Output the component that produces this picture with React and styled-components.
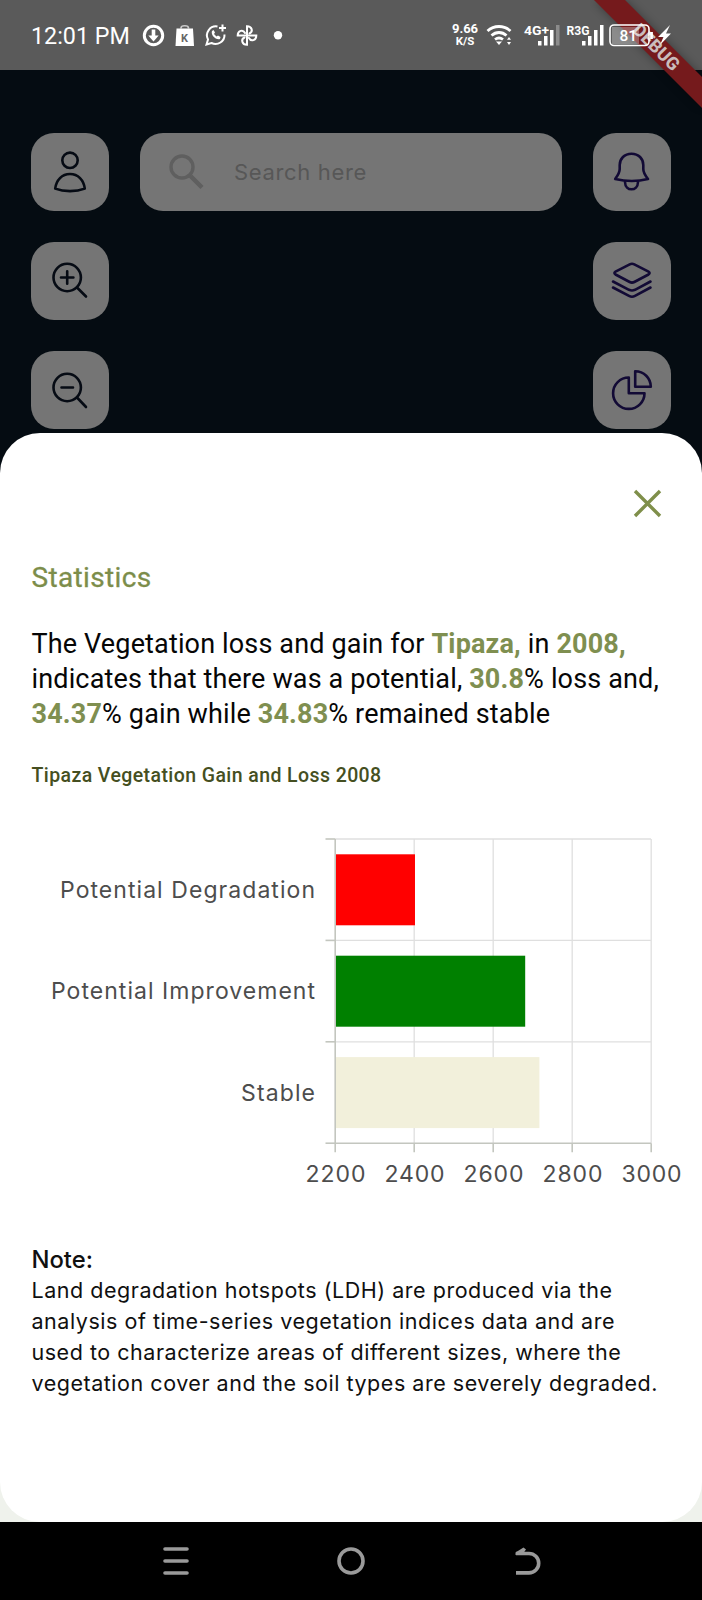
import React from "react";
import styled, { createGlobalStyle } from "styled-components";

const GlobalStyle = createGlobalStyle`
  * { box-sizing: border-box; }
  body { margin: 0; background: #000; }
  p, h1, h2, h3 { margin: 0; }
`;

const Screen = styled.div`
  position: relative;
  width: 702px;
  height: 1600px;
  overflow: hidden;
  display: flex;
  flex-direction: column;
  background: #050c12;
  font-family: Roboto, "Liberation Sans", sans-serif;
`;

const StatusBar = styled.header`
  height: 70px;
  flex: none;
  display: flex;
  align-items: center;
  justify-content: space-between;
  padding: 0 28px 0 31px;
  background: #5a5a5a;
  color: #fff;
`;

const StatusGroup = styled.div`
  position: relative;
  z-index: 2;
  display: flex;
  align-items: center;
  gap: ${(p) => p.$gap}px;
`;

const Clock = styled.span`
  font-size: 23.3px;
  line-height: 28px;
  width: 98px;
  white-space: nowrap;
  margin-top: 2px;
`;

const NetSpeed = styled.div`
  display: flex;
  flex-direction: column;
  align-items: center;
  width: 26px;
  font-weight: 700;
  font-size: 13px;
  line-height: 12.5px;
  white-space: nowrap;
  span + span { font-size: 11.5px; }
`;

const MapArea = styled.main`
  height: 363px;
  flex: none;
  display: flex;
  justify-content: space-between;
  align-items: flex-start;
  padding: 62.5px 31px 0;
`;

const ToolColumn = styled.div`
  display: flex;
  flex-direction: column;
  gap: 31px;
`;

const ToolButton = styled.button`
  display: flex;
  align-items: center;
  justify-content: center;
  width: 78px;
  height: 78px;
  padding: 0;
  border: 0;
  border-radius: 23px;
  background: #757575;
  color: ${(p) => p.$tint || "#060b14"};
`;

const SearchField = styled.div`
  display: flex;
  align-items: center;
  width: 422px;
  height: 78px;
  padding-left: 29px;
  gap: 29px;
  border-radius: 23px;
  background: #757575;
`;

const SearchHint = styled.span`
  font: 400 22px/28px Inter, sans-serif;
  letter-spacing: 0.65px;
  color: #575757;
`;

const SheetBackdrop = styled.div`
  height: 1089px;
  flex: none;
  background: linear-gradient(#050c12 50%, #eff2ec 50%);
`;

const Sheet = styled.section`
  height: 100%;
  display: flex;
  flex-direction: column;
  padding: 53px 31px 0 31.5px;
  border-radius: 40px;
  background: #fff;
`;

const CloseButton = styled.button`
  align-self: flex-end;
  display: flex;
  padding: 0;
  margin-right: 7px;
  border: 0;
  background: none;
`;

const SheetTitle = styled.h1`
  margin-top: 40px;
  font-weight: 400;
  font-size: 28px;
  line-height: 36px;
  letter-spacing: 0.35px;
  color: #7c8d4a;
  -webkit-text-stroke: 0.3px currentColor;
`;

const Summary = styled.p`
  margin-top: 31px;
  font-size: 27px;
  line-height: 35.1px;
  letter-spacing: 0.15px;
  color: #060606;
  white-space: nowrap;
`;

const Strong = styled.strong`
  font-weight: 700;
  color: #7f8f50;
`;

const ChartTitle = styled.h2`
  margin-top: 30px;
  font-weight: 500;
  font-size: 19.5px;
  line-height: 28px;
  letter-spacing: 0.41px;
  color: #454f21;
`;

const Chart = styled.svg`
  display: block;
  flex: none;
  margin: 38px -31px 0 -31.5px;
`;

const Label = styled.text`
  font-family: Inter, sans-serif;
  font-size: 23px;
  fill: #4d4d4d;
`;

const NoteTitle = styled.h3`
  margin-top: 45.5px;
  font: 500 23.8px/31px Inter, sans-serif;
  color: #101010;
`;

const NoteText = styled.p`
  font: 400 21.5px/31.2px Inter, sans-serif;
  letter-spacing: 0.53px;
  color: #101010;
  white-space: nowrap;
`;

const NavBar = styled.nav`
  height: 78px;
  flex: none;
  display: flex;
  align-items: center;
  justify-content: center;
  gap: 139.5px;
  background: #000;
`;

const DebugBanner = styled.svg`
  position: absolute;
  z-index: 1;
  top: 0;
  right: 0;
`;

const Icon = ({ w = 42, h = 42, sw = 2.6, children }) => (
  <svg width={w} height={h} viewBox={`0 0 ${w} ${h}`} fill="none" stroke="currentColor"
    strokeWidth={sw} strokeLinecap="round" strokeLinejoin="round">{children}</svg>
);

const UserIcon = () => (
  <Icon>
    <circle cx="21" cy="9.3" r="7.700" />
    <path d="M21 23C13 23 7.2 29 6.2 37.600C15 41 27 41 35.8 37.600C34.8 29 29 23 21 23Z" />
  </Icon>
);

const ZoomIcon = ({ plus }) => (
  <Icon>
    <circle cx="18.2" cy={plus ? 17.5 : 18.5} r="13.700" />
    <path d={plus ? "M28 27.5L37 36.500M12 17.5H24.4M18.2 11.3V23.7" : "M28 28.5L37 38M12.500 18.5H24"} />
  </Icon>
);

const BellIcon = () => (
  <Icon>
    <path d="M20.5 2.7C13.4 2.7 8.7 7.8 8.7 14V18C8.7 22 6 25.5 4.2 28Q21 32 37 28C35 25.5 32.3 22 32.3 18V14C32.3 7.8 27.6 2.7 20.5 2.7Z" />
    <path d="M14 31C14.2 40.7 26.8 40.7 27 31" />
  </Icon>
);

const LayersIcon = () => (
  <Icon>
    <path d="M18.7 4.4Q21 3.2 23.3 4.4L37.500 11.7Q39.700 13 37.500 14.5L23.3 22Q21 23.2 18.7 22L4.500 14.5Q2.300 13 4.500 11.7Z" />
    <path d="M2.000 21.500L18.000 29.800Q21.000 31.200 24.000 29.800L39.500 21.500" />
    <path d="M2.000 27.500L18.000 35.900Q21.000 37.500 24.000 35.900L39.500 27.500" />
  </Icon>
);

const PieIcon = () => (
  <Icon>
    <path d="M17.800 8.500A15.700 15.700 0 1 0 33.500 24.200H17.800Z" />
    <path d="M24.200 2.200V17.800H39.800A15.600 15.600 0 0 0 24.200 2.200Z" />
  </Icon>
);

const SearchIcon = () => (
  <svg width="36" height="36" viewBox="0 0 36 36" fill="none" stroke="#5f5f5f" strokeWidth="3.400">
    <circle cx="13" cy="13" r="11" />
    <path d="M21.500 22L33 33.500" strokeWidth="4.500" />
  </svg>
);

const BARS = [
  { name: "Potential Degradation", value: 2402, color: "#ff0000", width: 255 },
  { name: "Potential Improvement", value: 2681, color: "#008000", width: 264 },
  { name: "Stable", value: 2717, color: "#f2f0db", width: 74 },
];
const TICKS = [2200, 2400, 2600, 2800, 3000];
const LEFT = 335.2;
const TOP = 11;
const ROW = 101.4;
const scaleX = (v) => LEFT + ((v - 2200) / 800) * 316;

const VegetationChart = () => (
  <Chart width="702" height="370" viewBox="0 0 702 370">
    <g stroke="#dfdfdf" strokeWidth="1.300">
      {TICKS.slice(1).map((t) => <path key={t} d={`M${scaleX(t)} ${TOP}V${TOP + 3 * ROW}`} />)}
      {[0, 1, 2].map((i) => <path key={i} d={`M${LEFT} ${TOP + i * ROW}H651`} />)}
    </g>
    {BARS.map((b, i) => (
      <rect key={b.name} x={LEFT} y={TOP + 15.300 + i * ROW} width={scaleX(b.value) - LEFT} height="71" fill={b.color} />
    ))}
    <g stroke="#c3c6bf" strokeWidth="1.600">
      {[0, 1, 2, 3].map((i) => <path key={i} d={`M325.500 ${TOP + i * ROW}H${LEFT}`} />)}
      {TICKS.map((t) => <path key={t} d={`M${scaleX(t)} ${TOP + 3 * ROW}v9`} />)}
      <path d={`M${LEFT} ${TOP}V${TOP + 3 * ROW}H651`} fill="none" />
    </g>
    {BARS.map((b, i) => (
      <Label key={b.name} x={315 - b.width} y={TOP + 58.700 + i * ROW} textLength={b.width}>{b.name}</Label>
    ))}
    {TICKS.map((t) => (
      <Label key={t} x={scaleX(t) - 29.700} y="354" textLength="60">{t}</Label>
    ))}
  </Chart>
);

const StatusLeftIcons = () => (
  <svg width="150" height="30" viewBox="136 20 150 30" fill="none" stroke="#fff" strokeWidth="2">
    <circle cx="153.500" cy="35.500" r="9.200" strokeWidth="3" />
    <path d="M153.500 29.500V38" strokeWidth="3.600" />
    <path d="M148.300 35.500H158.700L153.500 41.500Z" fill="#fff" stroke="none" />
    <path d="M176.500 28.500H193L194 46H175.500Z" fill="#fff" stroke="none" />
    <path d="M181 29V28C181 25 188.500 25 188.500 28V29" strokeWidth="1.600" stroke="#ccc" />
    <text x="181" y="41.500" fontSize="11" fontWeight="700" fill="#666" stroke="none">K</text>
    <path d="M217.500 26.500A9 9 0 0 0 208 39.500L206.500 44.500L211.500 43A9 9 0 0 0 224.500 34.500" />
    <path d="M222.500 24.500V31.500M219 28H226" />
    <path d="M212 31C210.500 35 216 40.500 220 39L220.500 37L218 35.500L216.500 36.500L214 34L215 32.500L213.500 30Z" fill="#fff" stroke="none" />
    {[0, 90, 180, 270].map((r) => (
      <path key={r} transform={`rotate(${r} 247 35.500)`} d="M247 35.500V26.200C252 26.200 253.500 31.500 249.500 33.500" strokeLinecap="round" />
    ))}
    <circle cx="278" cy="35.300" r="4.200" fill="#fff" stroke="none" />
  </svg>
);

const StatusRightIcons = () => (
  <svg width="190" height="30" viewBox="484 20 190 30" fill="none" stroke="#fff" strokeWidth="2.800">
    <path d="M487.500 31C494 25 504 25 510.500 31M491.500 35.500C496 31.500 502 31.500 506.500 35.500M495 39.500Q499 36.500 503 39.500" />
    <path d="M496 41.500L499 45L502 41.500Z" fill="#fff" stroke="none" />
    <path d="M507 39.800L509 37L511 39.800ZM507 42L509 45L511 42Z" fill="#fff" stroke="none" />
    <g fill="#fff" stroke="none" fontSize="13.500" fontWeight="700">
      <text x="524" y="35" textLength="25" lengthAdjust="spacingAndGlyphs">4G+</text>
      <text x="566.500" y="35" textLength="23" lengthAdjust="spacingAndGlyphs">R3G</text>
      <rect x="538" y="41" width="3.500" height="4.500" />
      <rect x="544" y="36" width="3.500" height="9.500" />
      <rect x="550" y="30" width="3.500" height="15.500" />
      <rect x="556" y="25" width="3.500" height="20.500" fill="#8c8c8c" />
      <rect x="582" y="41" width="3.500" height="4.500" />
      <rect x="588" y="36" width="3.500" height="9.500" />
      <rect x="594" y="30" width="3.500" height="15.500" />
      <rect x="600" y="25" width="3.500" height="20.500" />
    </g>
    <rect x="612" y="27" width="27" height="17" fill="#fff" opacity="0.300" stroke="none" />
    <rect x="610" y="25" width="39" height="20.500" rx="4" strokeWidth="1.600" />
    <path d="M651.500 32V39" />
    <text x="619.500" y="41" fontSize="15.500" fontWeight="500" fill="#fff" stroke="none">81</text>
    <path d="M670 25L658 37H663.500L660 45L671 33.500H666Z" fill="#fff" stroke="none" />
  </svg>
);

export default function App() {
  return (
    <Screen>
      <GlobalStyle />
      <StatusBar>
        <StatusGroup $gap={7}>
          <Clock>12:01 PM</Clock>
          <StatusLeftIcons />
        </StatusGroup>
        <StatusGroup $gap={6}>
          <NetSpeed><span>9.66</span><span>K/S</span></NetSpeed>
          <StatusRightIcons />
        </StatusGroup>
      </StatusBar>
      <MapArea>
        <ToolColumn>
          <ToolButton><UserIcon /></ToolButton>
          <ToolButton><ZoomIcon plus /></ToolButton>
          <ToolButton><ZoomIcon /></ToolButton>
        </ToolColumn>
        <SearchField>
          <SearchIcon />
          <SearchHint>Search here</SearchHint>
        </SearchField>
        <ToolColumn>
          <ToolButton $tint="#120a35"><BellIcon /></ToolButton>
          <ToolButton $tint="#120a35"><LayersIcon /></ToolButton>
          <ToolButton $tint="#120a35"><PieIcon /></ToolButton>
        </ToolColumn>
      </MapArea>
      <SheetBackdrop>
        <Sheet>
          <CloseButton aria-label="Close">
            <svg width="34" height="34" viewBox="0 0 34 34" stroke="#7f8f4a" strokeWidth="3.400">
              <path d="M5 5L30 30M30 5L5 30" />
            </svg>
          </CloseButton>
          <SheetTitle>Statistics</SheetTitle>
          <Summary>
            The Vegetation loss and gain for <Strong>Tipaza,</Strong> in <Strong>2008,</Strong><br />
            indicates that there was a potential, <Strong>30.8</Strong>% loss and,<br />
            <Strong>34.37</Strong>% gain while <Strong>34.83</Strong>% remained stable
          </Summary>
          <ChartTitle>Tipaza Vegetation Gain and Loss 2008</ChartTitle>
          <VegetationChart />
          <NoteTitle>Note:</NoteTitle>
          <NoteText>
            Land degradation hotspots (LDH) are produced via the<br />
            analysis of time-series vegetation indices data and are<br />
            used to characterize areas of different sizes, where the<br />
            vegetation cover and the soil types are severely degraded.
          </NoteText>
        </Sheet>
      </SheetBackdrop>
      <NavBar>
        <svg width="36" height="36" viewBox="0 0 36 36" stroke="#9a9a9a" strokeWidth="3.600" strokeLinecap="round">
          <path d="M7 6H29M7 18H29M7 30H29" />
        </svg>
        <svg width="36" height="36" viewBox="0 0 36 36" fill="none" stroke="#9a9a9a" strokeWidth="3.600">
          <circle cx="18" cy="18" r="12" />
        </svg>
        <svg width="36" height="36" viewBox="0 0 36 36" fill="none" stroke="#9a9a9a" strokeWidth="3.600">
          <path d="M7 10.500H20A9.700 9.700 0 0 1 20 29.900H7" />
          <path d="M6.500 9.500L14.500 4.500L17 6.500L13 12H6.500Z" fill="#9a9a9a" stroke="none" />
        </svg>
      </NavBar>
      <DebugBanner width="112" height="120" viewBox="590 0 112 120">
        <defs>
          <filter id="bannerShadow" x="-30%" y="-30%" width="160%" height="160%">
            <feGaussianBlur stdDeviation="5" />
          </filter>
        </defs>
        <path d="M594 0H625L702 77V108Z" fill="#000" opacity="0.350" filter="url(#bannerShadow)" />
        <path d="M594 0H625L702 77V108Z" fill="#751a1c" />
        <text transform="translate(656.500 47) rotate(45)" textAnchor="middle" y="6.300" fontSize="18" fontWeight="800"
          fill="#c9bcbc" textLength="58">DEBUG</text>
      </DebugBanner>
    </Screen>
  );
}
